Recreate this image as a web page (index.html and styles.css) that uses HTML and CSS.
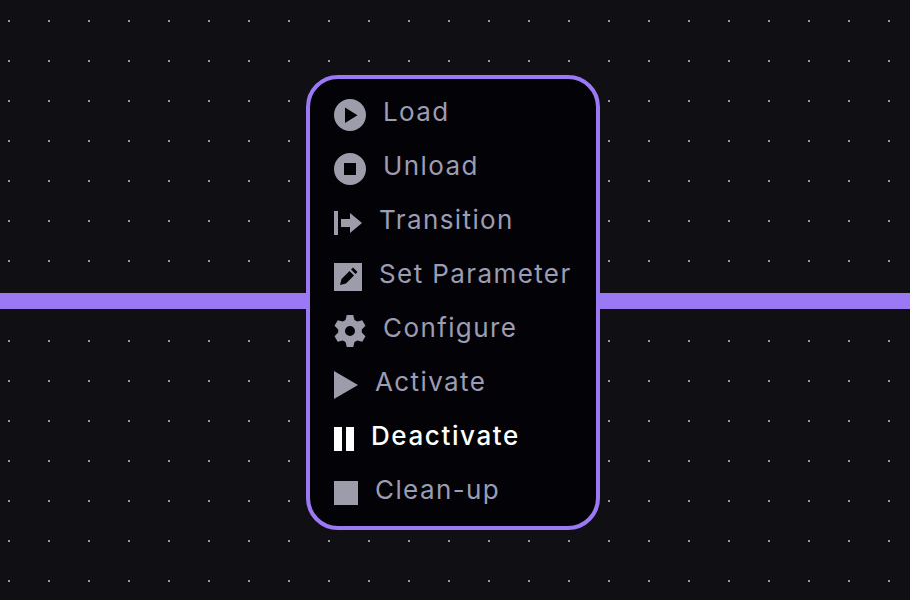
FILE: index.html
```html
<!DOCTYPE html>
<html lang="en">
<head>
  <meta charset="UTF-8" />
  <meta name="viewport" content="width=device-width, initial-scale=1.0"/>
  <title>Lifecycle Menu</title>
  <link rel="stylesheet" href="styles.css">
</head>
<body>

<div class="canvas">
  <div class="edge edge-left"></div>

  <ul class="node-menu">
    <li class="menu-item">
      <svg class="icon" width="32" height="32" viewBox="0 0 32 32"><path fill-rule="evenodd" d="M16 0a16 16 0 1 1 0 32a16 16 0 1 1 0-32zM11 8.500v15.500l12.500-7.750z"/></svg>
      <span class="label">Load</span>
    </li>
    <li class="menu-item">
      <svg class="icon" width="32" height="32" viewBox="0 0 32 32"><path fill-rule="evenodd" d="M16 0a16 16 0 1 1 0 32a16 16 0 1 1 0-32zM10 10v12h12v-12z"/></svg>
      <span class="label">Unload</span>
    </li>
    <li class="menu-item">
      <svg class="icon" width="28" height="24" viewBox="0 0 28 24"><path d="M0 0h4v24h-4zM7 8h9v-6l12 10l-12 10v-6h-9z"/></svg>
      <span class="label">Transition</span>
    </li>
    <li class="menu-item">
      <svg class="icon" width="28" height="28" viewBox="0 0 28 28"><path fill-rule="evenodd" d="M0 0h28v28h-28zM6 22l1.500-6l8-8l4.500 4.500l-8 8zM17 6.500l2-2l4.500 4.500l-2 2z"/></svg>
      <span class="label">Set Parameter</span>
    </li>
    <li class="menu-item">
      <svg class="icon" width="32" height="32" viewBox="0 0 32 32"><path fill-rule="evenodd" d="M12.800 0h6.400l1.300 5l2.780 1.600l4.980-1.370l3.200 5.540l-3.680 3.630v3.200l3.680 3.630l-3.200 5.540l-4.980-1.370l-2.780 1.600l-1.300 5h-6.400l-1.300-5l-2.780-1.600l-4.980 1.370l-3.200-5.540l3.680-3.630v-3.200l-3.680-3.630l3.200-5.540l4.980 1.370l2.780-1.600zM16 11a5 5 0 1 0 0 10a5 5 0 1 0 0-10z"/></svg>
      <span class="label">Configure</span>
    </li>
    <li class="menu-item">
      <svg class="icon" width="24" height="28" viewBox="0 0 24 28"><path d="M0 0l24 14l-24 14z"/></svg>
      <span class="label">Activate</span>
    </li>
    <li class="menu-item active">
      <svg class="icon" width="20" height="24" viewBox="0 0 20 24"><path d="M0 0h8v24h-8zM12 0h8v24h-8z"/></svg>
      <span class="label">Deactivate</span>
    </li>
    <li class="menu-item">
      <svg class="icon" width="24" height="24" viewBox="0 0 24 24"><path d="M0 0h24v24h-24z"/></svg>
      <span class="label">Clean-up</span>
    </li>
  </ul>

  <div class="edge edge-right"></div>
</div>

</body>
</html>
```

FILE: styles.css
```css
* {
  box-sizing: border-box;
}

body {
  margin: 0;
  background: #101014;
  font-family: "Inter", sans-serif;
}

.canvas {
  display: flex;
  align-items: center;
  height: 600px;
  padding-top: 5px;
  background-image: radial-gradient(circle, #9a9aa0 0, #9a9aa0 1px, transparent 1px);
  background-size: 40px 40px;
  background-position: -11px 1px;
}

.edge {
  height: 16px;
  margin-top: -3px;
  background: #9b79f5;
}

.edge-left {
  width: 306px;
}

.edge-right {
  flex: 1;
}

.node-menu {
  list-style: none;
  width: 294px;
  height: 455px;
  margin: 0;
  padding: 9px 0 6px 24px;
  background: #030307;
  border: 4px solid #9b79f5;
  border-radius: 32px;
}

.menu-item {
  display: flex;
  align-items: center;
  gap: 17px;
  height: 54px;
  color: #9c9cb2;
}

.menu-item.active {
  color: #fff;
}

.icon {
  flex: none;
  fill: #9d9cab;
}

.active .icon {
  fill: #fff;
}

.label {
  margin-bottom: 6px;
  font-size: 26px;
  line-height: 32px;
  letter-spacing: 1.4px;
}

.active .label {
  font-weight: 500;
  letter-spacing: 1.6px;
}
```
